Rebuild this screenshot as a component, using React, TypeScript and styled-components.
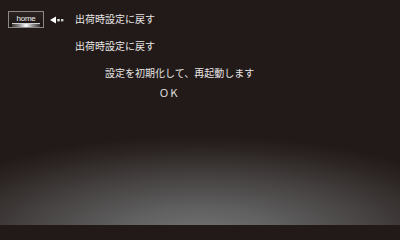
import React from "react";
import styled, { createGlobalStyle } from "styled-components";

const Global = createGlobalStyle`
  html, body { margin: 0; padding: 0; background: #221a18; }
  body { font-family: "Noto Sans CJK JP", "Noto Sans", sans-serif; }
`;

const Screen = styled.div`
  position: relative;
  width: 400px;
  height: 225px;
  overflow: hidden;
  background:
    radial-gradient(ellipse 300px 100px at 200px 236px, #737373 0%, #606060 28%, #433f3e 62%, #2c2523 86%, rgba(34,26,24,0) 100%),
    #221a18;
  display: flex;
  flex-direction: column;
`;

const Header = styled.div`
  display: flex;
  align-items: center;
  padding: 11px 0 0 8px;
  height: 17px;
`;

const HomeButton = styled.div`
  position: relative;
  box-sizing: border-box;
  width: 36px;
  height: 17px;
  border: 1px solid #8c8886;
  background: linear-gradient(#2a2322, #1a1413);
  display: flex;
  justify-content: center;
  font-family: "Liberation Sans", Arial, sans-serif;
  font-size: 8px;
  line-height: 8px;
  color: #f4f4f4;
  padding-top: 3px;
  letter-spacing: -0.2px;
`;

const Glow = styled.span`
  position: absolute;
  left: 3px;
  right: 3px;
  bottom: 0;
  height: 3px;
  border-top: 1px solid #cfcfcf;
  background: linear-gradient(90deg, #3a3534 0%, #8a8a8a 25%, #ffffff 50%, #8a8a8a 75%, #3a3534 100%);
`;

const BackArrow = styled.svg`
  margin-left: 6px;
  width: 14px;
  height: 8px;
  display: block;
`;

const Title = styled.div`
  margin-left: 11px;
  margin-top: -2px;
  font-size: 10px;
  line-height: 12px;
  color: #e8e6e6;
`;

const Line = styled.div<{ $indent: number; $gap: number }>`
  margin-left: ${(p) => p.$indent}px;
  margin-top: ${(p) => p.$gap}px;
  font-size: 10px;
  line-height: 12px;
  color: #e8e6e6;
  white-space: nowrap;
`;

export default function App() {
  return (
    <>
      <Global />
      <Screen>
        <Header>
          <HomeButton>
            home
            <Glow />
          </HomeButton>
          <BackArrow viewBox="0 0 14 8">
            <polygon points="0,4 6,0.5 6,7.5" fill="#ffffff" />
            <rect x="7.3" y="3" width="2.4" height="2.4" fill="#e8e8e8" />
            <rect x="11" y="3" width="2.4" height="2.4" fill="#d0d0d0" />
          </BackArrow>
          <Title>出荷時設定に戻す</Title>
        </Header>
        <Line $indent={75} $gap={12}>出荷時設定に戻す</Line>
        <Line $indent={105} $gap={15}>設定を初期化して、再起動します</Line>
        <Line $indent={159} $gap={8}>ＯＫ</Line>
      </Screen>
    </>
  );
}
